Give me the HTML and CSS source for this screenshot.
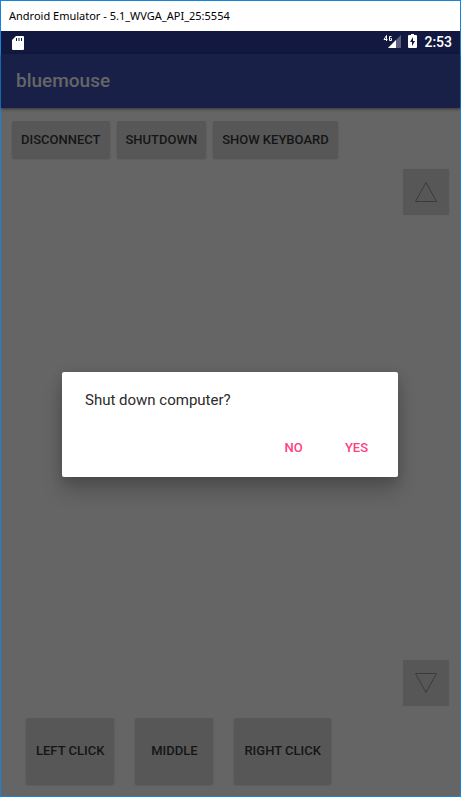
FILE: index.html
```html
<!DOCTYPE html>
<html lang="en">
<head>
<meta charset="utf-8">
<title>Android Emulator</title>
<link rel="stylesheet" href="styles.css">
</head>
<body>
<div class="window">
  <div class="titlebar">Android Emulator - 5.1_WVGA_API_25:5554</div>
  <div class="screen">
    <div class="statusbar">
      <svg class="sd" width="12" height="14" viewBox="0 0 12 14"><path fill="#fff" fill-rule="evenodd" d="M4 0h7a1 1 0 0 1 1 1v12a1 1 0 0 1-1 1H1a1 1 0 0 1-1-1V4zM4 2v3h1V2zM6.500 2v3h1V2zM9 2v3h1V2z"/></svg>
      <div class="indicators">
        <svg width="18" height="14" viewBox="0 0 18 14"><path fill="#5b5e80" d="M18 1v13H5z"/><path fill="#fff" d="M13 6v8H5z"/><path fill="none" stroke="#fff" d="M3.500 7V1.500L1 5.500h3.500M8.500 2.500h-2v4h2v-2h-1"/></svg>
        <svg width="9" height="14" viewBox="0 0 9 14"><path fill="#fff" fill-rule="evenodd" d="M3 0h3v1h2a1 1 0 0 1 1 1v11a1 1 0 0 1-1 1H1a1 1 0 0 1-1-1V2a1 1 0 0 1 1-1h2zM5 3L2 8h2v4l3-5H5z"/></svg>
        <span class="clock">2:53</span>
      </div>
    </div>
    <header class="appbar"><h1>bluemouse</h1></header>
    <main class="content">
      <div class="actions">
        <button class="btn">DISCONNECT</button>
        <button class="btn">SHUTDOWN</button>
        <button class="btn">SHOW KEYBOARD</button>
      </div>
      <div class="scroller">
        <button class="arrow" aria-label="Scroll up"><svg width="24" height="22" viewBox="0 0 24 22"><path d="M12 1.500L22.500 20.500h-21z"/></svg></button>
        <button class="arrow" aria-label="Scroll down"><svg width="24" height="22" viewBox="0 0 24 22"><path d="M12 20.500L1.500 1.500h21z"/></svg></button>
      </div>
      <div class="clicks">
        <button class="btn tall">LEFT CLICK</button>
        <button class="btn tall">MIDDLE</button>
        <button class="btn tall">RIGHT CLICK</button>
      </div>
    </main>
    <div class="overlay">
      <div class="dialog" role="dialog" aria-labelledby="message">
        <p id="message">Shut down computer?</p>
        <div class="choices">
          <button>NO</button>
          <button>YES</button>
        </div>
      </div>
    </div>
  </div>
</div>
</body>
</html>
```
FILE: styles.css
```css
* { box-sizing: border-box; }
body { margin: 0; font-family: Roboto, "Liberation Sans", sans-serif; }
button { font-family: inherit; border: 0; padding: 0; }
svg { display: block; }

.window {
  min-height: 100vh;
  display: flex;
  flex-direction: column;
  border: 1px solid #1883d7;
}
.titlebar {
  padding: 0 8px;
  background: #fff;
  color: #000;
  font: 11px/30px "Noto Sans", "Open Sans", sans-serif;
}
.screen {
  position: relative;
  flex: 1;
  display: flex;
  flex-direction: column;
  background: #656565;
}
.statusbar {
  display: flex;
  align-items: center;
  justify-content: space-between;
  height: 23px;
  padding: 0 8px 0 11px;
  background: #131840;
}
.indicators { display: flex; align-items: center; gap: 7px; }
.indicators svg { margin-bottom: 3px; }
.clock { color: #fff; font-size: 14px; font-weight: 500; line-height: 23px; }
.appbar {
  padding: 0 15px;
  background: #192048;
  box-shadow: 0 1px 3px rgba(0, 0, 0, 0.5);
}
.appbar h1 {
  margin: 0;
  color: #666;
  font-size: 19px;
  font-weight: 500;
  line-height: 54px;
}
.content { flex: 1; display: flex; flex-direction: column; padding: 13px 11px 12px; }
.actions { display: flex; gap: 7px; }
.btn {
  height: 37px;
  padding: 0 9px;
  border-radius: 2px;
  background: #575757;
  color: #151515;
  font-size: 13px;
  font-weight: 500;
  box-shadow: 0 1px 2px rgba(0, 0, 0, 0.2);
}
.scroller {
  flex: 1;
  display: flex;
  flex-direction: column;
  align-items: flex-end;
  justify-content: space-between;
  padding: 11px 0 12px;
}
.arrow {
  display: grid;
  place-items: center;
  width: 46px;
  height: 46px;
  border-radius: 2px;
  background: #575757;
  box-shadow: 0 0 1px rgba(0, 0, 0, 0.2);
}
.arrow path { fill: none; stroke: #3b3b3b; }
.clicks { display: flex; gap: 21px; padding: 0 14px; }
.tall { height: 66px; min-width: 78px; padding: 0 10px 2px; }

.overlay {
  position: absolute;
  inset: 23px 0 0;
  display: flex;
  align-items: center;
  padding: 0 62px 2px 61px;
}
.dialog {
  flex: 1;
  padding: 18px 12px 11px 23px;
  border-radius: 2px;
  background: #fff;
  box-shadow: 0 14px 20px rgba(0, 0, 0, 0.2), 0 2px 12px rgba(0, 0, 0, 0.15);
}
.dialog p { margin: 0; color: #2b2b2b; font-size: 15px; line-height: 20px; }
.choices { display: flex; justify-content: flex-end; gap: 4px; margin-top: 20px; }
.choices button {
  min-width: 59px;
  height: 36px;
  padding: 0 8px;
  background: transparent;
  color: #ff4081;
  font-size: 13px;
  font-weight: 500;
}
```
